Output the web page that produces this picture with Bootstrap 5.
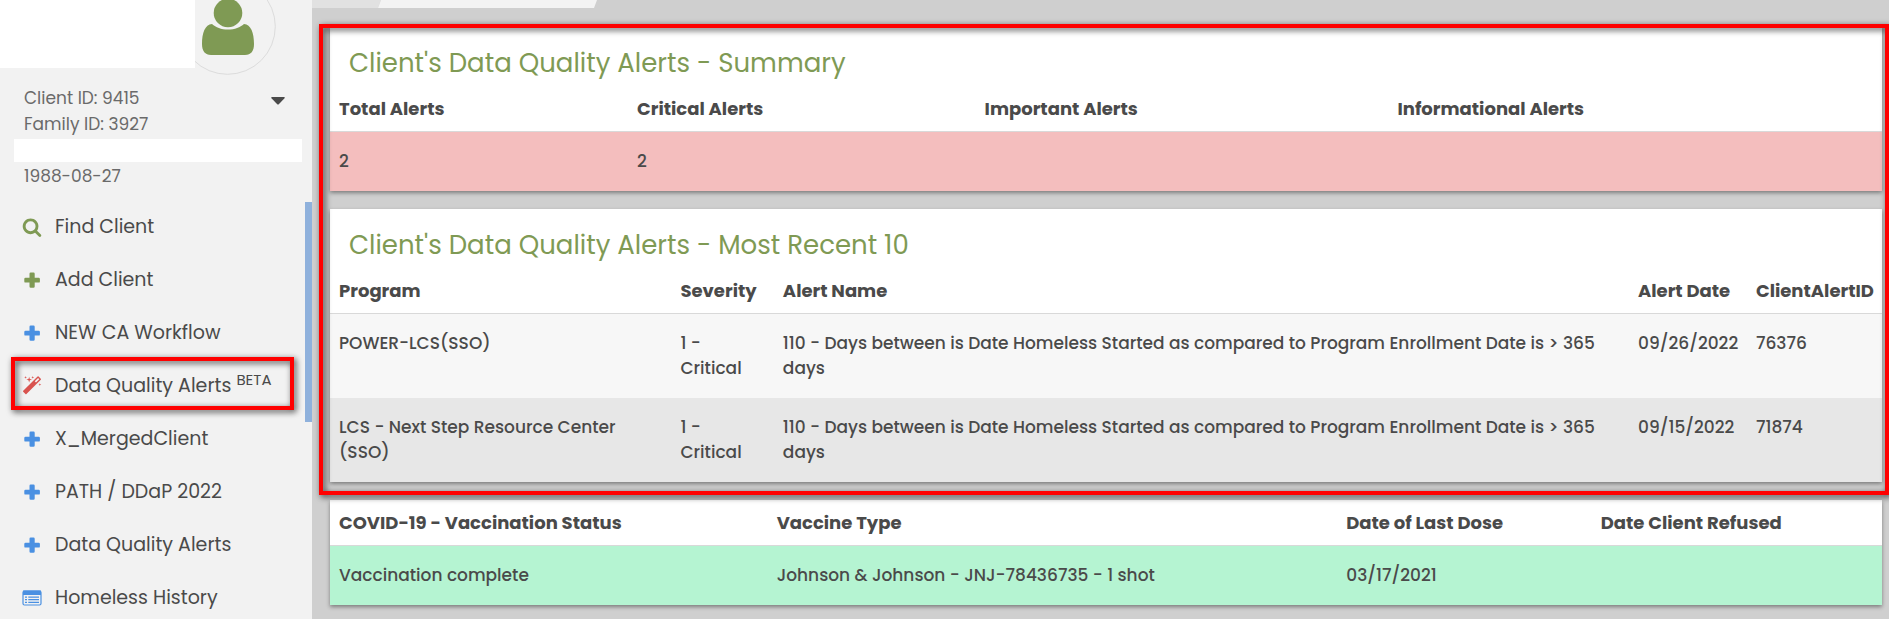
<!DOCTYPE html>
<html lang="en">
<head>
<meta charset="utf-8">
<meta name="viewport" content="width=device-width, initial-scale=1">
<title>Client Dashboard</title>
<link href="https://cdn.jsdelivr.net/npm/bootstrap@5.3.0/dist/css/bootstrap.min.css" rel="stylesheet">
<style>
  :root { --green: #7f9a54; --blue: #4a90e2; --ink: #4a4a4a; --line: #d9d9d9; }
  body { font-family: Poppins, Inter, "Open Sans", sans-serif; font-size: 17px; line-height: 25px; color: var(--ink); background: #cfcfcf; }
  .sidebar { width: 312px; background: #f2f2f2; }
  .name-block { width: 195px; height: 68px; background: #fff; }
  .avatar-clip { width: 84px; height: 85px; }
  .client-meta { line-height: 26px; color: #6a6a6a; padding: 0 24px 13px; }
  .name-mask { height: 23px; margin: 2px -14px 1px -10px; background: #fff; }
  .caret-btn { width: 20px; height: 20px; margin-top: 6px; }
  .side-scroll { width: 7px; height: 220px; background: #8fb1dc; }
  .menu-link { height: 53px; padding: 0 0 4px 22px; gap: 13px; color: var(--ink); font-size: 19px; text-decoration: none; white-space: nowrap; }
  .menu-link svg { width: 20px; height: 20px; flex: none; }
  .menu-link sup { font-size: 15px; top: -7px; }
  .ico-green { color: var(--green); } .ico-blue { color: var(--blue); } .ico-red { color: #d9534f; }
  .callout::after { content: ""; position: absolute; border: 4px solid #f00; pointer-events: none;
    filter: drop-shadow(2px 2px 3px rgba(0,0,0,.75)); }
  .menu-callout::after { inset: -4px 11px 4px 11px; }
  .panel-callout::after { inset: -3px -7px -13px -11px; }
  .tab-strip { height: 8px; }
  .tab-strip svg { width: 286px; height: 8px; }
  .content { padding: 19px 7px 14px 18px; }
  .stack { gap: 18px; }
  .panel { background: #fff; box-shadow: 0 2px 4px rgba(0,0,0,.4); }
  .panel-title { font-size: 26px; line-height: 36px; font-weight: 400; color: var(--green); padding: 18px 19px 6px; margin: 0; }
  .grid-table { margin: 0; table-layout: fixed; color: var(--ink); }
  .grid-table > thead > tr > th { padding: 9px 0 10px 9px; border-bottom: 1px solid var(--line); font-size: 18px; font-weight: 700; background: transparent; white-space: nowrap; }
  .grid-table > tbody > tr > td { padding: 17px 9px; border: 0; font-weight: 500; color: var(--ink); background: transparent; }
  .untitled-table > thead > tr > th { padding-top: 10px; }
  .row-red { background: #f4bebe; } .row-light { background: #f7f7f7; } .row-dark { background: #e7e7e7; } .row-green { background: #b5f4d2; }
</style>
</head>
<body>
<svg class="d-none" xmlns="http://www.w3.org/2000/svg">
  <symbol id="i-plus" viewBox="0 0 20 20"><path fill="currentColor" d="M8.700 2.500h2.800q1.200 0 1.200 1.200v4h4q1.200 0 1.200 1.200v2.500q0 1.200-1.200 1.200h-4v4q0 1.200-1.200 1.200H8.700q-1.200 0-1.200-1.200v-4h-4q-1.200 0-1.200-1.200V8.900q0-1.200 1.200-1.200h4v-4q0-1.200 1.200-1.200z"/></symbol>
  <symbol id="i-search" viewBox="0 0 1792 1792"><path fill="currentColor" d="M1216 832q0-185-131.500-316.500t-316.500-131.500-316.500 131.500-131.500 316.500 131.500 316.500 316.500 131.500 316.500-131.500 131.500-316.500zm512 832q0 52-38 90t-90 38q-54 0-90-38l-343-342q-179 124-399 124-143 0-273.500-55.500t-225-150-150-225-55.500-273.500 55.500-273.500 150-225 225-150 273.500-55.500 273.500 55.500 225 150 150 225 55.500 273.500q0 220-124 399l343 343q37 37 37 90z"/></symbol>
  <symbol id="i-magic" viewBox="0 0 1792 1792"><path fill="currentColor" d="M1254 581l293-293-107-107-293 293zm447-293q0 27-18 45l-1286 1286q-18 18-45 18t-45-18l-198-198q-18-18-18-45t18-45l1286-1286q18-18 45-18t45 18l198 198q18 18 18 45zm-1351-190l98 30-98 30-30 98-30-98-98-30 98-30 30-98zm350 162l196 60-196 60-60 196-60-196-196-60 196-60 60-196zm930 478l98 30-98 30-30 98-30-98-98-30 98-30 30-98zm-640-640l98 30-98 30-30 98-30-98-98-30 98-30 30-98z"/></symbol>
  <symbol id="i-list" viewBox="0 0 20 20"><rect x="1" y="3" width="18" height="14" rx="1.500" fill="none" stroke="currentColor" stroke-width="1.200"/><path fill="currentColor" d="M1 2.600h18V7H1zM3 8.400h2v1.300H3zM6.300 8.400H17v1.300H6.300zM3 11h2v1.300H3zM6.300 11H17v1.300H6.300zM3 13.700h2V15H3zM6.300 13.700H17V15H6.300z"/></symbol>
</svg>
<div class="d-flex vh-100 overflow-hidden">
  <aside class="sidebar flex-shrink-0 overflow-hidden">
    <div class="d-flex">
      <div class="name-block"></div>
      <svg class="avatar-clip" viewBox="0 0 84 85" role="img" aria-label="Client">
        <circle cx="32.500" cy="26.500" r="47.800" fill="none" stroke="#dcdcdc"/>
        <circle cx="33" cy="13" r="14.300" fill="#7f9a54"/>
        <path fill="#7f9a54" d="M17 24c4 3.500 9 5.500 16 5.500S45 27.500 49 24c7 .5 10 9 10 20 0 7-3 11-9 11H16c-6 0-9-4-9-11 0-11 3-19.500 10-20z"/>
      </svg>
    </div>
    <div class="client-meta">
      <div class="d-flex justify-content-between">
        <div>Client ID: 9415<br>Family ID: 3927</div>
        <button class="btn p-0 border-0 caret-btn d-flex align-items-center justify-content-center" type="button" aria-label="Client details">
          <svg width="14" height="8" viewBox="0 0 14 8"><path d="M1 0h12q1.500 0 .5 1.300L8 7q-1 1-2 0L.5 1.300Q-.5 0 1 0z" fill="#4a4a4a"/></svg>
        </button>
      </div>
      <div class="name-mask"></div>
      <div>1988-08-27</div>
    </div>
    <div class="d-flex align-items-start">
      <nav class="flex-grow-1" aria-label="Client menu">
        <a href="#" class="menu-link d-flex align-items-center"><svg class="ico-green"><use href="#i-search"/></svg>Find Client</a>
        <a href="#" class="menu-link d-flex align-items-center"><svg class="ico-green"><use href="#i-plus"/></svg>Add Client</a>
        <a href="#" class="menu-link d-flex align-items-center"><svg class="ico-blue"><use href="#i-plus"/></svg>NEW CA Workflow</a>
        <a href="#" class="menu-link d-flex align-items-center position-relative callout menu-callout"><svg class="ico-red"><use href="#i-magic"/></svg><span>Data Quality Alerts <sup>BETA</sup></span></a>
        <a href="#" class="menu-link d-flex align-items-center"><svg class="ico-blue"><use href="#i-plus"/></svg>X_MergedClient</a>
        <a href="#" class="menu-link d-flex align-items-center"><svg class="ico-blue"><use href="#i-plus"/></svg>PATH / DDaP 2022</a>
        <a href="#" class="menu-link d-flex align-items-center"><svg class="ico-blue"><use href="#i-plus"/></svg>Data Quality Alerts</a>
        <a href="#" class="menu-link d-flex align-items-center"><svg class="ico-blue"><use href="#i-list"/></svg>Homeless History</a>
      </nav>
      <div class="side-scroll"></div>
    </div>
  </aside>
  <main class="flex-grow-1 overflow-hidden">
    <div class="tab-strip d-flex">
      <svg viewBox="0 0 286 8"><path fill="#e1e1e1" d="M0 0h69l-3 8H0z"/><path fill="#f3f3f3" d="M69 0h216l-3 8H66z"/></svg>
    </div>
    <div class="content stack d-flex flex-column">
      <div class="stack d-flex flex-column position-relative callout panel-callout">
        <section class="panel">
          <h2 class="panel-title">Client's Data Quality Alerts - Summary</h2>
          <table class="table grid-table">
            <colgroup><col style="width:19.2%"><col style="width:22.4%"><col style="width:26.6%"><col></colgroup>
            <thead><tr><th>Total Alerts</th><th>Critical Alerts</th><th>Important Alerts</th><th>Informational Alerts</th></tr></thead>
            <tbody><tr class="row-red"><td>2</td><td>2</td><td></td><td></td></tr></tbody>
          </table>
        </section>
        <section class="panel">
          <h2 class="panel-title">Client's Data Quality Alerts - Most Recent 10</h2>
          <table class="table grid-table">
            <colgroup><col style="width:22%"><col style="width:6.6%"><col style="width:55.1%"><col style="width:7.6%"><col></colgroup>
            <thead><tr><th>Program</th><th>Severity</th><th>Alert Name</th><th>Alert Date</th><th>ClientAlertID</th></tr></thead>
            <tbody>
              <tr class="row-light"><td>POWER-LCS(SSO)</td><td>1 - Critical</td><td>110 - Days between is Date Homeless Started as compared to Program Enrollment Date is &gt; 365 days</td><td>09/26/2022</td><td>76376</td></tr>
              <tr class="row-dark"><td>LCS - Next Step Resource Center (SSO)</td><td>1 - Critical</td><td>110 - Days between is Date Homeless Started as compared to Program Enrollment Date is &gt; 365 days</td><td>09/15/2022</td><td>71874</td></tr>
            </tbody>
          </table>
        </section>
      </div>
      <section class="panel">
        <table class="table grid-table untitled-table">
          <colgroup><col style="width:28.2%"><col style="width:36.7%"><col style="width:16.4%"><col></colgroup>
          <thead><tr><th>COVID-19 - Vaccination Status</th><th>Vaccine Type</th><th>Date of Last Dose</th><th>Date Client Refused</th></tr></thead>
          <tbody><tr class="row-green"><td>Vaccination complete</td><td>Johnson &amp; Johnson - JNJ-78436735 - 1 shot</td><td>03/17/2021</td><td></td></tr></tbody>
        </table>
      </section>
    </div>
  </main>
</div>
<script src="https://cdn.jsdelivr.net/npm/bootstrap@5.3.0/dist/js/bootstrap.bundle.min.js"></script>
</body>
</html>
